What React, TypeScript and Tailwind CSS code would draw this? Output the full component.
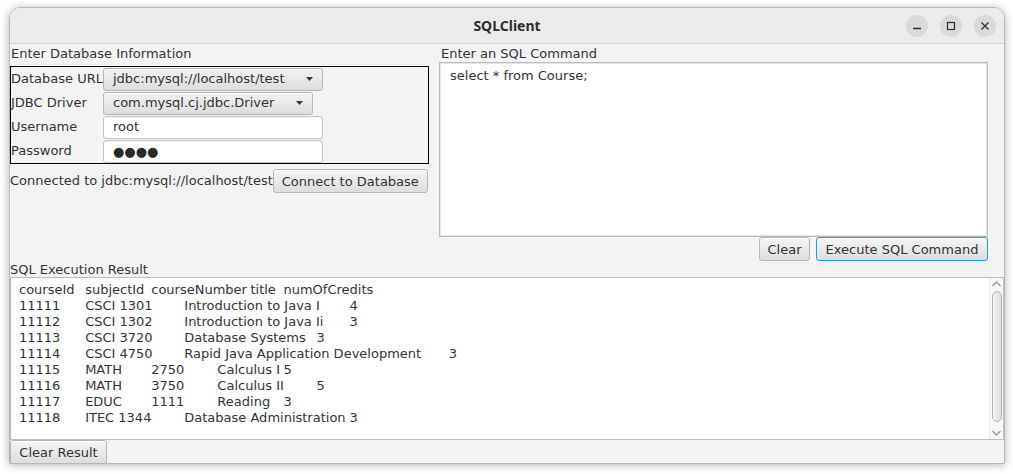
import type { ReactNode } from "react";

const resultLines = [
  "courseId\tsubjectId\tcourseNumber\ttitle\tnumOfCredits",
  "11111\tCSCI 1301\tIntroduction to Java I\t4",
  "11112\tCSCI 1302\tIntroduction to Java Ii\t3",
  "11113\tCSCI 3720\tDatabase Systems\t3",
  "11114\tCSCI 4750\tRapid Java Application Development\t3",
  "11115\tMATH\t2750\tCalculus I\t5",
  "11116\tMATH\t3750\tCalculus II\t5",
  "11117\tEDUC\t1111\tReading\t3",
  "11118\tITEC 1344\tDatabase Administration\t3",
];

function Button({ children, className = "", focused = false }: { children: ReactNode; className?: string; focused?: boolean }) {
  return (
    <button
      className={
        "h-[24px] shrink-0 flex items-center justify-center rounded-[3px] border bg-linear-to-b from-[#f4f4f4] to-[#dedede] shadow-[inset_0_1px_0_#ffffff] leading-none text-[#333] " +
        (focused ? "border-[#1b9fd6] shadow-[inset_0_0_0_1px_#c6e8f6] " : "border-[#b5b5b5] ") +
        className
      }
    >
      {children}
    </button>
  );
}

function ComboBox({ value, width }: { value: string; width: string }) {
  return (
    <div className={"h-[23px] flex items-center rounded-[3px] border border-[#b5b5b5] bg-linear-to-b from-[#f2f2f2] to-[#dedede] shadow-[inset_0_1px_0_#ffffff] pl-[9px] " + width}>
      <span className="flex-1">{value}</span>
      <svg width="7" height="4" viewBox="0 0 7 4" className="mr-[9px]">
        <path d="M0 0h7L3.5 4z" fill="#3a3a3a" />
      </svg>
    </div>
  );
}

function TextField({ children }: { children: ReactNode }) {
  return (
    <div className="h-[23px] w-[220px] flex items-center rounded-[3px] border border-[#c4c4c4] bg-white shadow-[inset_0_1px_1px_rgba(0,0,0,0.05)] pl-[9px]">
      {children}
    </div>
  );
}

function FormRow({ label, children }: { label: string; children: ReactNode }) {
  return (
    <div className="flex items-center h-[24px]">
      <div className="w-[92px]">{label}</div>
      {children}
    </div>
  );
}

function WindowButton({ children }: { children: ReactNode }) {
  return <div className="w-[22px] h-[22px] rounded-full bg-[#dadada] flex items-center justify-center">{children}</div>;
}

function Chevron({ down = false }: { down?: boolean }) {
  return (
    <svg width="9" height="6" viewBox="0 0 9 6">
      <polyline
        points={down ? "0.5,1 4.5,5 8.5,1" : "0.5,5 4.5,1 8.5,5"}
        fill="none"
        stroke="#8c8c8c"
        strokeWidth="1.1"
      />
    </svg>
  );
}

export default function App() {
  return (
    <div className="w-[1013px] h-[474px] overflow-hidden bg-white pt-[7px] pl-[9px] font-['DejaVu_Sans',sans-serif] text-[13px] text-[#333]">
      <div className="w-[996px] h-[457px] flex flex-col overflow-hidden rounded-t-[11px] border border-[#b8b8b8] shadow-[0_1px_8px_rgba(0,0,0,0.3)]">
        {/* title bar */}
        <div className="h-[36px] shrink-0 grid grid-cols-[1fr_auto_1fr] items-center bg-[#ebebeb] border-b border-[#d2d2d2]">
          <div />
          <div className="font-['Noto_Sans',sans-serif] font-bold text-[14px] text-[#2e2e2e]">SQLClient</div>
          <div className="flex justify-end gap-[12px] pr-[8px]">
            <WindowButton>
              <svg width="10" height="10" viewBox="0 0 10 10">
                <path d="M1 7.5h8" stroke="#2e2e2e" strokeWidth="1.3" />
              </svg>
            </WindowButton>
            <WindowButton>
              <svg width="10" height="10" viewBox="0 0 10 10">
                <rect x="1.5" y="1.5" width="7" height="7" fill="none" stroke="#2e2e2e" strokeWidth="1.2" />
              </svg>
            </WindowButton>
            <WindowButton>
              <svg width="10" height="10" viewBox="0 0 10 10">
                <path d="M1.5 1.5l7 7M8.5 1.5l-7 7" stroke="#2e2e2e" strokeWidth="1.2" />
              </svg>
            </WindowButton>
          </div>
        </div>

        {/* client area */}
        <div className="flex-1 flex flex-col bg-[#f3f3f3]">
          <div className="h-[217px] flex">
            <div className="w-[420px] flex flex-col">
              <div className="h-[18px] leading-[20px] pl-px">Enter Database Information</div>
              <div className="mt-[4px] w-[419px] border border-black">
                <FormRow label="Database URL">
                  <ComboBox value="jdbc:mysql://localhost/test" width="w-[220px]" />
                </FormRow>
                <FormRow label="JDBC Driver">
                  <ComboBox value="com.mysql.cj.jdbc.Driver" width="w-[210px]" />
                </FormRow>
                <FormRow label="Username">
                  <TextField>root</TextField>
                </FormRow>
                <FormRow label="Password">
                  <TextField>
                    <span className="text-[13px] leading-none text-[#2a2a2a]">●●●●</span>
                  </TextField>
                </FormRow>
              </div>
              <div className="mt-[5px] h-[24px] flex items-center">
                <span>Connected to jdbc:mysql://localhost/test</span>
                <Button className="w-[155px]">Connect to Database</Button>
              </div>
            </div>

            <div className="ml-[9px] w-[549px] flex flex-col">
              <div className="h-[18px] leading-[20px] pl-[2px]">Enter an SQL Command</div>
              <div className="h-[175px] bg-white border border-[#bdbdbd] shadow-[inset_0_0_0_1px_#e4e4e4] px-[10px] pt-[5px] leading-[16px]">
                select * from Course;
              </div>
              <div className="h-[24px] flex justify-end items-end gap-[6px]">
                <Button className="w-[51px] h-[23px]">Clear</Button>
                <Button focused className="w-[172px]">Execute SQL Command</Button>
              </div>
            </div>
          </div>

          <div className="h-[16px] leading-[18px]">SQL Execution Result</div>
          <div className="h-[163px] flex bg-white border border-[#bdbdbd]">
            <div className="flex-1 pl-[8px] pt-[4px] leading-[16px] whitespace-pre [tab-size:8]">
              {resultLines.join("\n")}
            </div>
            <div className="w-[14px] flex flex-col items-center border-l border-[#ececec] bg-[#f8f8f8]">
              <div className="h-[12px] flex items-center justify-center">
                <Chevron />
              </div>
              <div className="mt-px h-[131px] w-[10px] rounded-full border border-[#b2b2b2] bg-linear-to-r from-[#f3f3f3] to-[#dddddd]" />
              <div className="mt-auto h-[12px] flex items-center justify-center">
                <Chevron down />
              </div>
            </div>
          </div>
          <div className="h-[23px] flex">
            <Button className="w-[97px] h-[23px]">Clear Result</Button>
          </div>
        </div>
      </div>
    </div>
  );
}
